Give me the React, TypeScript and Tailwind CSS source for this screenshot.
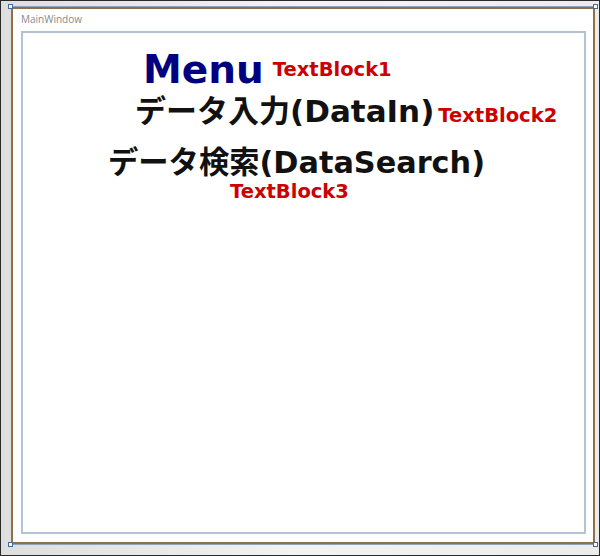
import React from "react";

const font = "font-['DejaVu_Sans','Noto_Sans_CJK_JP',sans-serif] font-bold";

function Handle({ className }: { className: string }) {
  return <div className={`absolute w-[5px] h-[5px] border border-[#3a6ea5] bg-white ${className}`} />;
}

export default function App() {
  return (
    <div className="w-[600px] h-[556px] border border-[#2a2a2a] bg-gradient-to-r from-[#dedede] via-[#f3f3f3] to-[#ececec] overflow-hidden">
      <div className="relative ml-[10px] mt-[5px] w-[584px] h-[539px] border-y border-[#8ea4be]">
        {/* designer frame */}
        <div className="w-full h-full border-2 border-[#8f6f4c] bg-white">
          <div className="pl-[8px] pt-[3px] h-[22px] text-[10px] leading-[14px] font-['Open_Sans',sans-serif] text-[#8a8a8a]">
            MainWindow
          </div>
          <div className="ml-[8px] w-[565px] h-[503px] border-2 border-[#b3c3d6] bg-white">
            <div className="flex items-start mt-[17px]">
              <span className={`${font} ml-[120px] text-[39px] leading-none text-[#000080]`}>Menu</span>
              <span className={`${font} ml-[9px] mt-[10px] text-[19.5px] leading-none text-[#cc0000]`}>TextBlock1</span>
            </div>
            <div className="flex items-baseline mt-[7px]">
              <span className={`${font} ml-[112px] text-[31px] leading-none text-[#111]`}>データ入力(DataIn)</span>
              <span className={`${font} ml-[4px] text-[19.5px] leading-none text-[#cc0000]`}>TextBlock2</span>
            </div>
            <div className="flex mt-[21px]">
              <span className={`${font} ml-[85px] text-[30.3px] leading-none text-[#111]`}>データ検索(DataSearch)</span>
            </div>
            <div className="flex mt-[4px]">
              <span className={`${font} ml-[207px] text-[19.5px] leading-none text-[#cc0000]`}>TextBlock3</span>
            </div>
          </div>
        </div>
        <Handle className="-left-[3px] -top-[3px]" />
        <Handle className="-right-[3px] -top-[3px]" />
        <Handle className="-left-[3px] -bottom-[3px]" />
        <Handle className="-right-[3px] -bottom-[3px]" />
      </div>
    </div>
  );
}
